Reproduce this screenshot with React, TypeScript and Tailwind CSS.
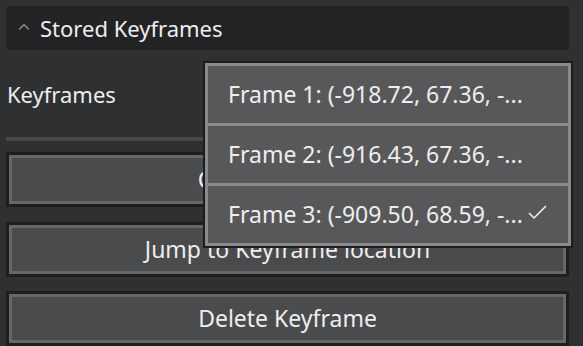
export default function App() {
  const frames = [
    { label: "Frame 1: (-918.72, 67.36, -...", checked: false },
    { label: "Frame 2: (-916.43, 67.36, -...", checked: false },
    { label: "Frame 3: (-909.50, 68.59, -...", checked: true },
  ];

  const buttons = [
    { label: "Create Keyframe", mt: "mt-[11px]" },
    { label: "Jump to Keyframe location", mt: "mt-[15px]" },
    { label: "Delete Keyframe", mt: "mt-[14px]" },
  ];

  return (
    <div
      className="relative w-[583px] h-[346px] overflow-hidden bg-[#2f3032] text-[#eeeeee]"
      style={{ fontFamily: '"Noto Sans", "Open Sans", sans-serif' }}
    >
      <div className="flex flex-col px-[6px] pt-[6px]">
        {/* section header */}
        <div className="flex items-center h-[44px] w-[563px] rounded-[3px] bg-[#232325] pl-[11px]">
          <svg width="14" height="8" viewBox="0 0 14 8" className="mt-[-2px]">
            <polyline points="2,6.5 7,1.8 12,6.5" fill="none" stroke="#8c8d8f" strokeWidth="1.4" />
          </svg>
          <span className="ml-[9px] text-[22px] leading-none">Stored Keyframes</span>
        </div>

        {/* keyframes row */}
        <div className="flex items-center h-[87px] pl-[1px]">
          <span className="text-[22px] leading-none">Keyframes</span>
        </div>

        <div className="h-[4px] w-[563px] bg-[#47484a]" />

        {buttons.map((b, i) => (
          <div key={i} className={`${b.mt} w-[563px] h-[55px] border-[3px] border-[#1d1e20]`}>
            <div className="flex items-center justify-center h-full border-[3px] border-[#666769] bg-[#4a4b4d]">
              <span className="text-[23px] leading-none">{b.label}</span>
            </div>
          </div>
        ))}
      </div>

      {/* popup list */}
      <div className="absolute left-[203px] top-[61px] w-[370px] border-[2px] border-[#1c1d1f] bg-[#1c1d1f]">
        <div className="flex flex-col border-[3px] border-[#8a8a8c] bg-[#8a8a8c] gap-[3px]">
          {frames.map((f, i) => (
            <div key={i} className="flex items-center h-[57px] bg-[#58585a] pl-[20px]">
              <span className="text-[23px] leading-none">{f.label}</span>
              {f.checked && (
                <svg width="20" height="16" viewBox="0 0 20 16" className="ml-[5px] mt-[-4px]">
                  <polyline points="1,8 6,13 18,1" fill="none" stroke="#f2f2f2" strokeWidth="1.5" />
                </svg>
              )}
            </div>
          ))}
        </div>
      </div>
    </div>
  );
}
